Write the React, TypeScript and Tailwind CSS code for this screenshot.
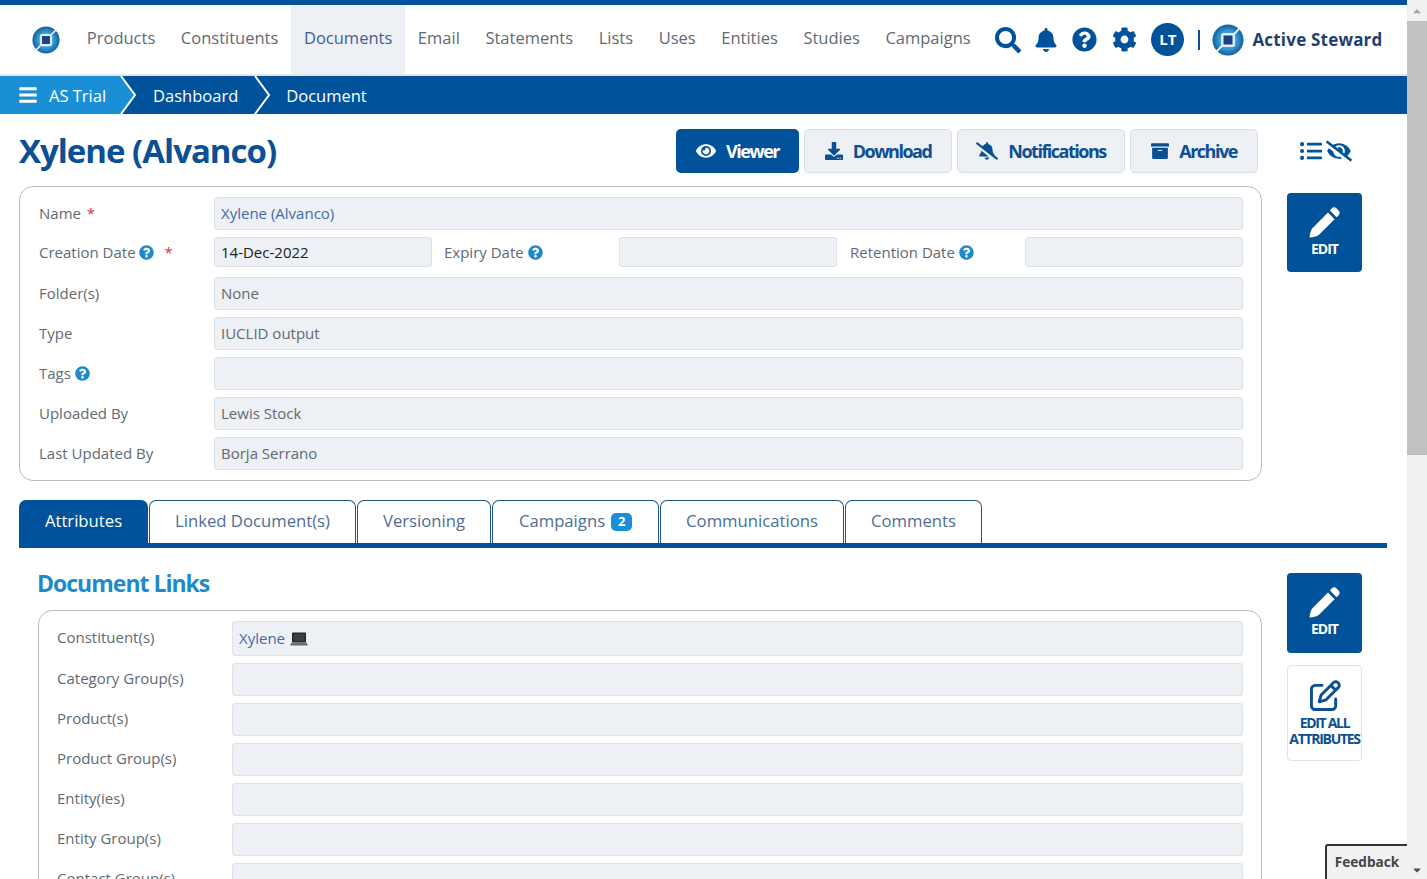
import React from "react";
import {
  FaArchive,
  FaBars,
  FaBell,
  FaBellSlash,
  FaCaretDown,
  FaCaretUp,
  FaCog,
  FaDownload,
  FaEye,
  FaEyeSlash,
  FaListUl,
  FaQuestionCircle,
  FaSearch,
} from "react-icons/fa";
import { FaRegPenToSquare } from "react-icons/fa6";

const navItems = ["Products", "Constituents", "Documents", "Email", "Statements", "Lists", "Uses", "Entities", "Studies", "Campaigns"];

const Logo = ({ size, id }: { size: number; id: string }) => (
  <svg width={size} height={size} viewBox="0 0 32 32" className="shrink-0">
    <defs>
      <radialGradient id={id} cx="50%" cy="50%" r="52%">
        <stop offset="0%" stopColor="#d5ecf8" />
        <stop offset="50%" stopColor="#3d9fd9" />
        <stop offset="100%" stopColor="#0d5c98" />
      </radialGradient>
    </defs>
    <circle cx="16" cy="16" r="15.5" fill={`url(#${id})`} />
    <path d="M3.5 28.5 L28.5 3.5" stroke="#e9f5fb" strokeWidth="1.8" />
    <rect x="9" y="9" width="14" height="14" rx="2.5" fill="#dcEFF9" />
    <rect x="11.5" y="11.5" width="9" height="9" fill="#1c3f85" />
  </svg>
);

const Pen = () => (
  <svg width="31" height="31" viewBox="0 0 31 31" fill="currentColor" className="shrink-0">
    <path d="M0.5 30.5 C0.8 27 1.6 23.5 3.4 21.2 L19 5.6 L25.6 12.2 L10 27.8 C7.6 29.6 4 30.3 0.5 30.5 Z" />
    <path d="M21 3.6 L22.6 1.6 C24.2 0 26 0 27.6 1.4 L29.6 3.4 C31 5 31 6.8 29.4 8.4 L27.6 10.2 Z" />
  </svg>
);

const Laptop = () => (
  <svg width="18" height="14" viewBox="0 0 18 14" className="ml-[5px] shrink-0">
    <rect x="2" y="0.5" width="14" height="10" rx="1" fill="#222222" />
    <rect x="3.2" y="1.7" width="11.6" height="7.6" fill="#3d3d3d" />
    <path d="M1.5 10.5 H16.5 L18 13.5 H0 Z" fill="#6d6d6d" />
  </svg>
);

const Help = () => <FaQuestionCircle className="text-[15px] text-[#1f8ac9] shrink-0" />;

const Field = ({ className, color = "#5f6a72", children }: { className?: string; color?: string; children?: React.ReactNode }) => (
  <div
    style={{ color }}
    className={`flex items-center bg-[#edf0f5] border border-[#dfe3e8] rounded-[3px] px-[6px] text-[15px] ${className ?? ""}`}
  >
    {children}
  </div>
);

const Row = ({ label, help, value }: { label: string; help?: boolean; value?: string }) => (
  <div className="flex items-center h-[33px]">
    <div className="w-[175px] flex items-center gap-[4px] text-[15px] text-[#5f6a72]">
      {label}
      {help && <Help />}
    </div>
    <Field className="flex-1 h-[33px]">{value}</Field>
  </div>
);

const LinkRow = ({ label, h = "h-[33px]", children }: { label: string; h?: string; children?: React.ReactNode }) => (
  <div className="flex items-center">
    <div className="w-[175px] pb-[2px] text-[15px] text-[#5f6a72]">{label}</div>
    <Field className={`flex-1 ${h}`}>{children}</Field>
  </div>
);

const ActionButton = ({ icon, label, width, primary }: { icon: React.ReactNode; label: string; width: string; primary?: boolean }) => (
  <button
    className={`${width} h-[44px] flex items-center justify-center gap-[10px] rounded-[5px] text-[18px] font-bold tracking-[-1.5px] ${
      primary ? "bg-[#00529b] text-white" : "bg-[#edf0f5] border border-[#d9dde3] text-[#0b4f94]"
    }`}
  >
    {icon}
    {label}
  </button>
);

const EditButton = ({ h }: { h: string }) => (
  <button className={`w-[75px] ${h} rounded-[4px] bg-[#00529b] text-white flex flex-col items-center justify-center`}>
    <Pen />
    <span className="text-[14px] font-bold tracking-[-1px] mt-[1px] leading-[20px]">EDIT</span>
  </button>
);

const tabs = [
  { label: "Attributes", w: "w-[129px]", active: true },
  { label: "Linked Document(s)", w: "w-[207px]" },
  { label: "Versioning", w: "w-[134px]" },
  { label: "Campaigns", w: "w-[167px]", badge: "2" },
  { label: "Communications", w: "w-[184px]" },
  { label: "Comments", w: "w-[137px]" },
];

const Chevron = ({ left, fill }: { left: string; fill?: string }) => (
  <svg width="20" height="38" viewBox="0 0 20 38" className={`absolute top-0 ${left}`}>
    <path d="M1 0 L15 19 L1 38" fill={fill ?? "none"} stroke="#ffffff" strokeWidth="2" />
  </svg>
);

export default function App() {
  return (
    <div className="h-screen overflow-hidden flex bg-white font-['Open_Sans',sans-serif]">
      <div className="relative w-[1407px] shrink-0">
        <header className="h-[76px] border-t-[5px] border-[#00529b] border-b-2 border-b-[#e3e5e8] flex items-stretch">
          <div className="w-[74px] pl-[32px] flex items-center">
            <Logo size={28} id="logo-small" />
          </div>
          <nav className="flex items-stretch text-[16.5px] text-[#5f6a72]">
            {navItems.map((item) => (
              <a
                key={item}
                className={`flex items-center px-[12.8px] pb-[2px] ${item === "Documents" ? "bg-[#edf0f5] text-[#3f5f95]" : ""}`}
              >
                {item}
              </a>
            ))}
          </nav>
          <div className="flex items-center text-[#00529b] ml-[12px]">
            <FaSearch className="text-[26px]" />
            <FaBell className="text-[24px] ml-[13px]" />
            <FaQuestionCircle className="text-[25px] ml-[14px]" />
            <FaCog className="text-[25px] ml-[15px]" />
            <div className="w-[33px] h-[33px] ml-[14px] rounded-full bg-[#00529b] text-white text-[15px] font-bold flex items-center justify-center">
              LT
            </div>
            <div className="w-[2px] h-[20px] bg-[#00529b] ml-[14px]" />
            <div className="ml-[12px]">
              <Logo size={32} id="logo-large" />
            </div>
            <span className="ml-[8px] text-[17px] font-bold text-[#1f3f73] tracking-[0.2px] whitespace-nowrap">Active Steward</span>
          </div>
        </header>

        <div className="relative h-[38px] bg-[#00529b] flex items-center pt-[2px] text-white text-[16.5px]">
          <div className="absolute left-0 top-0 w-[121px] h-full bg-[#1b8fd6]" />
          <Chevron left="left-[120px]" fill="#1b8fd6" />
          <Chevron left="left-[254px]" />
          <FaBars className="relative ml-[18px] -mt-[2px] text-[20px]" />
          <span className="relative ml-[11px]">AS Trial</span>
          <span className="relative ml-[47px]">Dashboard</span>
          <span className="relative ml-[48px]">Document</span>
        </div>

        <div className="flex items-center h-[44px] mt-[15px] pl-[19px]">
          <h1 className="w-[657px] text-[33px] font-bold text-[#0b4f94] tracking-[-1px] whitespace-nowrap">Xylene (Alvanco)</h1>
          <div className="flex gap-[5px]">
            <ActionButton primary width="w-[123px]" label="Viewer" icon={<FaEye className="text-[20px]" />} />
            <ActionButton width="w-[148px]" label="Download" icon={<FaDownload className="text-[18px]" />} />
            <ActionButton width="w-[168px]" label="Notifications" icon={<FaBellSlash className="text-[22px]" />} />
            <ActionButton width="w-[128px]" label="Archive" icon={<FaArchive className="text-[18px]" />} />
          </div>
          <div className="flex items-center gap-[4px] ml-[42px] text-[#00529b]">
            <FaListUl className="text-[22px]" />
            <FaEyeSlash className="text-[26px]" />
          </div>
        </div>

        <div className="flex pl-[19px] mt-[13px]">
          <section className="w-[1243px] h-[295px] border border-[#b5bcc4] rounded-[14px] pl-[19px] pr-[18px] pt-[10px] flex flex-col gap-[7px]">
            <div className="flex items-center h-[33px]">
              <div className="w-[175px] text-[15px] text-[#5f6a72]">
                Name <span className="text-[#d6363f] ml-[2px]">*</span>
              </div>
              <Field className="flex-1 h-[33px]" color="#3f6ba8">Xylene (Alvanco)</Field>
            </div>
            <div className="flex items-center h-[30px]">
              <div className="w-[175px] flex items-center gap-[3px] text-[15px] text-[#5f6a72]">
                Creation Date <Help />
                <span className="text-[#d6363f] ml-[8px]">*</span>
              </div>
              <Field className="w-[218px] h-[30px]" color="#222222">14-Dec-2022</Field>
              <div className="w-[187px] pl-[12px] flex items-center gap-[4px] text-[15px] text-[#5f6a72]">
                Expiry Date <Help />
              </div>
              <Field className="w-[218px] h-[30px]" />
              <div className="w-[188px] pl-[13px] flex items-center gap-[4px] text-[15px] text-[#5f6a72]">
                Retention Date <Help />
              </div>
              <Field className="flex-1 h-[30px]" />
            </div>
            <div className="flex flex-col gap-[7px] mt-[3px]">
              <Row label="Folder(s)" value="None" />
              <Row label="Type" value="IUCLID output" />
              <Row label="Tags" help />
              <Row label="Uploaded By" value="Lewis Stock" />
              <Row label="Last Updated By" value="Borja Serrano" />
            </div>
          </section>
          <div className="ml-[25px] mt-[7px]">
            <EditButton h="h-[79px]" />
          </div>
        </div>

        <div className="ml-[19px] w-[1368px] mt-[19px] h-[48px] border-b-[5px] border-[#00529b] flex gap-[1px]">
          {tabs.map((tab) => (
            <div
              key={tab.label}
              className={`${tab.w} h-[43px] flex items-center justify-center gap-[6px] pb-[2px] rounded-t-[7px] text-[16.7px] ${
                tab.active
                  ? "bg-[#00529b] text-white"
                  : "bg-white border border-b-0 border-[#1f5585] text-[#4f6d92]"
              }`}
            >
              {tab.label}
              {tab.badge && (
                <span className="w-[21px] h-[18px] mt-[2px] rounded-[5px] bg-[#1b8fd6] text-white text-[13px] font-bold flex items-center justify-center">
                  {tab.badge}
                </span>
              )}
            </div>
          ))}
        </div>

        <div className="flex pl-[38px] mt-[20px]">
          <div className="w-[1224px]">
            <h2 className="text-[23px] leading-[30px] -ml-[1px] font-bold text-[#1f8ac9] tracking-[-1px]">Document Links</h2>
            <section className="mt-[12px] h-[400px] border border-[#b5bcc4] rounded-[14px] pl-[18px] pr-[18px] pt-[10px] flex flex-col gap-[7px]">
              <LinkRow label="Constituent(s)" h="h-[35px]">
                <span className="text-[#3f6ba8]">Xylene</span>
                <Laptop />
              </LinkRow>
              <LinkRow label="Category Group(s)" />
              <LinkRow label="Product(s)" />
              <LinkRow label="Product Group(s)" />
              <LinkRow label="Entity(ies)" />
              <LinkRow label="Entity Group(s)" />
              <LinkRow label="Contact Group(s)" />
            </section>
          </div>
          <div className="ml-[25px] mt-[5px] flex flex-col gap-[12px]">
            <EditButton h="h-[80px]" />
            <button className="w-[75px] h-[96px] rounded-[4px] bg-white border border-[#dfe3e8] text-[#0b4f94] flex flex-col items-center justify-center">
              <FaRegPenToSquare className="text-[31px] ml-[1px]" />
              <span className="text-[14px] font-bold tracking-[-1.3px] leading-[16px] mt-[4px] whitespace-nowrap">
                EDIT ALL
                <br />
                ATTRIBUTES
              </span>
            </button>
          </div>
        </div>

        {/* feedback tab sits over the page */}
        <div className="absolute right-0 bottom-0 w-[82px] h-[35px] bg-[#f1f1f1] border-2 border-b-0 border-r-0 border-[#333333] rounded-tl-[3px] flex items-center justify-center text-[13.6px] font-bold text-[#444444]">
          Feedback
        </div>
      </div>

      <div className="w-[20px] shrink-0 bg-[#f1f1f1] flex flex-col items-center relative">
        <FaCaretUp className="text-[12px] text-[#a3a3a3] mt-[5px]" />
        <div className="w-full h-[434px] bg-[#c1c1c1] mt-[4px]" />
        <FaCaretDown className="absolute bottom-[3px] text-[12px] text-[#505050]" />
      </div>
    </div>
  );
}
